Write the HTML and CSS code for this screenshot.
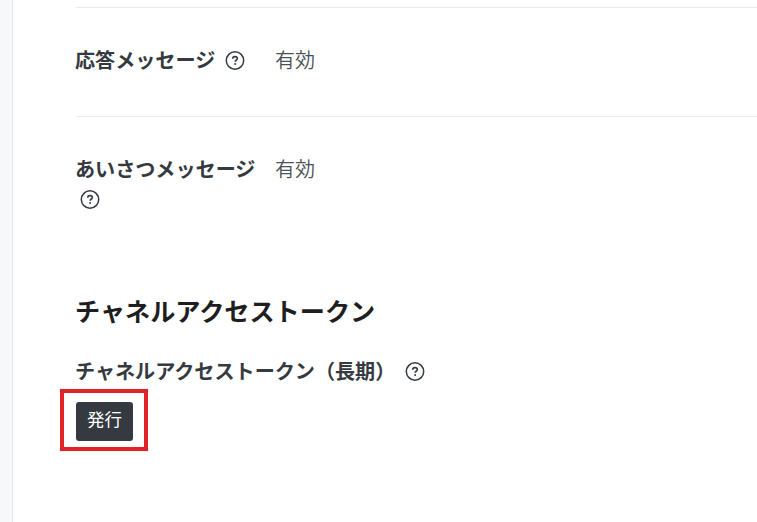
FILE: index.html
```
<!DOCTYPE html>
<html lang="ja">
<head>
<meta charset="utf-8">
<title>Messaging API</title>
<link rel="stylesheet" href="styles.css">
</head>
<body>
<svg class="defs" width="0" height="0"><symbol id="help" viewBox="0 0.5 20 20"><circle cx="10" cy="10" r="8.7" fill="none" stroke="currentColor" stroke-width="1.5"/><path d="M7.7 8.2C7.7 6.8 8.6 6.1 10 6.1s2.3.8 2.3 2c0 1.6-2.2 1.7-2.2 3.2" fill="none" stroke="currentColor" stroke-width="1.6"/><circle cx="10.1" cy="13.4" r="1"/></symbol></svg>
<div class="page">
  <aside class="side"></aside>
  <main class="main">
    <section class="row first"><h3 class="label">応答メッセージ <svg class="help"><use href="#help"/></svg></h3><p class="value">有効</p></section>
    <section class="row second"><h3 class="label">あいさつメッセージ <svg class="help"><use href="#help"/></svg></h3><p class="value">有効</p></section>
    <h2 class="title">チャネルアクセストークン</h2>
    <h3 class="token">チャネルアクセストークン（長期） <svg class="help"><use href="#help"/></svg></h3>
    <div class="highlight"><button class="issue">発行</button></div>
  </main>
</div>
</body>
</html>
```
FILE: styles.css
```
* { box-sizing: border-box; }
body { margin: 0; background: #fff; color: #353a40; font-family: "Noto Sans CJK JP", sans-serif; }
.defs { display: block; }
.page { display: flex; height: 522px; overflow: hidden; }
.side { width: 13px; flex: none; background: #f7f8fa; border-right: 1px solid #e1e4e8; }
.main { flex: 1; padding: 7px 0 0 63px; }
h2, h3, p { margin: 0; }
.row { display: flex; border-top: 1px solid #ebebeb; font-size: 20px; line-height: 30px; }
.first { height: 109px; padding-top: 37px; }
.second { height: 172px; padding-top: 37px; }
.label { width: 200px; margin-left: -1px; font-size: 20.1px; font-weight: 700; }
.value { color: #4c5156; font-weight: 350; }
.help { width: 20px; height: 20px; margin-left: 5px; vertical-align: -2.5px; fill: currentColor; }
.title { margin-left: -1px; color: #1e1e1e; font-size: 25.15px; line-height: 36px; padding-top: 4px; }
.token { margin-left: -1px; font-size: 20.1px; line-height: 30px; margin-top: 28px; }
.highlight { width: 88px; height: 62px; margin: 3px 0 0 -16px; border: 4px solid #e02329; padding: 9px 0 0 12px; }
.issue { display: block; width: 57px; height: 39px; padding: 0 0 6px; border: 0; border-radius: 3px; background: #353a40; color: #fff; font: 17.5px/33px "Noto Sans CJK JP", sans-serif; }
```
